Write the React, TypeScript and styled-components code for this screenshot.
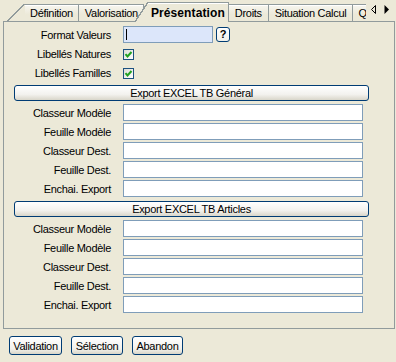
import React from 'react';
import styled, { createGlobalStyle } from 'styled-components';

const GlobalStyle = createGlobalStyle`
  html, body { margin: 0; padding: 0; background: #ECE9D8; }
  body {
    font-family: "Liberation Sans", Arial, sans-serif;
    font-size: 11px;
    letter-spacing: -0.3px;
    color: #000;
  }
  * { box-sizing: border-box; }
`;

const BG = '#ECE9D8';
const LINE = '#919B9C';

const Window = styled.div`
  width: 396px;
  height: 362px;
  background: ${BG};
  overflow: hidden;
`;

const TabStrip = styled.div`
  position: relative;
  display: flex;
  align-items: flex-end;
  height: 22px;
  margin: 0 1px 0 3px;
  padding-left: 4px;
  border-bottom: 1px solid ${LINE};
`;

const Tab = styled.div<{ $active?: boolean; $overlap?: number }>`
  position: relative;
  display: flex;
  height: ${p => (p.$active ? 20 : 17)}px;
  margin-bottom: ${p => (p.$active ? -1 : 0)}px;
  margin-left: ${p => -(p.$overlap ?? 0)}px;
  z-index: ${p => (p.$active ? 1 : 0)};
`;

const Slant = styled.span<{ $w: number; $fill: string }>`
  width: ${p => p.$w}px;
  height: 100%;
  flex: none;
  background: linear-gradient(
    to bottom right,
    transparent calc(50% - 0.7px),
    ${LINE} calc(50% - 0.7px),
    ${LINE} calc(50% + 0.7px),
    ${p => p.$fill} calc(50% + 0.7px)
  );
`;

const TabBody = styled.span<{ $active?: boolean; $pl: number; $pr: number }>`
  display: flex;
  align-items: center;
  height: 100%;
  padding: 0 ${p => p.$pr}px 0 ${p => p.$pl}px;
  border-top: 1px solid ${LINE};
  border-right: 1px solid ${LINE};
  background: ${p => (p.$active ? BG : `linear-gradient(#F7F6F0, ${BG} 60%)`)};
  font-weight: ${p => (p.$active ? 'bold' : 'normal')};
  font-size: ${p => (p.$active ? 12 : 11)}px;
  letter-spacing: ${p => (p.$active ? '0.1px' : '-0.3px')};
  white-space: nowrap;
  box-shadow: inset 0 1px 0 #fff;
`;

const ArrowBox = styled.div`
  position: absolute;
  right: -1px;
  top: 0;
  width: 30px;
  height: 21px;
  background: ${BG};
  display: flex;
  align-items: flex-start;
  padding: 5px 0 0 5px;
  gap: 8px;
  z-index: 2;
`;

const Panel = styled.div`
  margin: 0 1px 0 3px;
  height: 307px;
  border: 1px solid ${LINE};
  border-top: none;
  padding-top: 4px;
  display: flex;
  flex-direction: column;
`;

const Row = styled.div`
  display: flex;
  align-items: center;
  height: 17px;
  margin-bottom: 2px;
`;

const Label = styled.span`
  width: 107px;
  margin-right: 12px;
  text-align: right;
  white-space: nowrap;
`;

const Field = styled.div<{ $w: number; $focus?: boolean }>`
  position: relative;
  width: ${p => p.$w}px;
  height: 17px;
  border: 1px solid #7F9DB9;
  background: ${p => (p.$focus ? '#DCE6FA' : '#fff')};
`;

const Caret = styled.span`
  position: absolute;
  left: 2px;
  top: 2px;
  width: 1px;
  height: 11px;
  background: #000;
`;

const HelpButton = styled.div`
  width: 14px;
  height: 15px;
  margin-left: 3px;
  border: 1px solid #003C74;
  border-radius: 3px;
  background: linear-gradient(#ffffff, #F0F0EA);
  font-weight: bold;
  font-size: 11px;
  display: flex;
  align-items: center;
  justify-content: center;
  line-height: 1;
`;

const Check = styled.span`
  width: 11px;
  height: 11px;
  margin-top: 1px;
  border: 1px solid #1C5180;
  background: linear-gradient(135deg, #DCDCD7, #fff);
  display: flex;
  align-items: center;
  justify-content: center;
`;

const SectionHeader = styled.div`
  width: 355px;
  height: 16px;
  margin: 2px 0 3px 10px;
  border: 1px solid #003C74;
  border-radius: 3px;
  background: linear-gradient(#ffffff, #F3F2EE 60%, #D9D6CA);
  display: flex;
  align-items: center;
  justify-content: center;
  white-space: nowrap;
`;

const ButtonBar = styled.div`
  display: flex;
  gap: 9px;
  padding: 7px 0 0 9px;
`;

const Button = styled.div<{ $w: number }>`
  width: ${p => p.$w}px;
  height: 19px;
  border: 1px solid #003C74;
  border-radius: 3px;
  background: linear-gradient(#ffffff, #F2F1EC 70%, #D8D5C8);
  display: flex;
  align-items: center;
  justify-content: center;
  white-space: nowrap;
`;

const CheckMark = () => (
  <svg width="9" height="9" viewBox="0 0 9 9">
    <path d="M1.5 4.2 L3.5 6.5 L7.5 2" fill="none" stroke="#21A121" strokeWidth="2" />
  </svg>
);

const exportFields = ['Classeur Modèle', 'Feuille Modèle', 'Classeur Dest.', 'Feuille Dest.', 'Enchai. Export'];

const Section: React.FC<{ title: string }> = ({ title }) => (
  <>
    <SectionHeader>{title}</SectionHeader>
    {exportFields.map(f => (
      <Row key={f}>
        <Label>{f}</Label>
        <Field $w={240} />
      </Row>
    ))}
  </>
);

export default function App() {
  return (
    <Window>
      <GlobalStyle />
      <TabStrip>
        <Tab>
          <Slant $w={18} $fill={BG} />
          <TabBody $pl={5} $pr={5}>Définition</TabBody>
        </Tab>
        <Tab>
          <TabBody $pl={6} $pr={5}>Valorisation</TabBody>
        </Tab>
        <Tab $active $overlap={9}>
          <Slant $w={13} $fill={BG} />
          <TabBody $active $pl={3} $pr={3}>Présentation</TabBody>
        </Tab>
        <Tab>
          <TabBody $pl={6} $pr={6}>Droits</TabBody>
        </Tab>
        <Tab>
          <TabBody $pl={6} $pr={6}>Situation Calcul</TabBody>
        </Tab>
        <Tab>
          <TabBody $pl={5} $pr={8}>Q</TabBody>
        </Tab>
        <ArrowBox>
          <svg width="5" height="9" viewBox="0 0 5 9">
            <path d="M4.5 0.5 L4.5 8.5 L0.5 4.5 Z" fill="none" stroke="#000" strokeWidth="1" />
          </svg>
          <svg width="5" height="9" viewBox="0 0 5 9">
            <path d="M0.5 0 L0.5 9 L5 4.5 Z" fill="#000" />
          </svg>
        </ArrowBox>
      </TabStrip>
      <Panel>
        <Row>
          <Label>Format Valeurs</Label>
          <Field $w={90} $focus>
            <Caret />
          </Field>
          <HelpButton>?</HelpButton>
        </Row>
        <Row>
          <Label>Libellés Natures</Label>
          <Check><CheckMark /></Check>
        </Row>
        <Row>
          <Label>Libellés Familles</Label>
          <Check><CheckMark /></Check>
        </Row>
        <Section title="Export EXCEL TB Général" />
        <Section title="Export EXCEL TB Articles" />
      </Panel>
      <ButtonBar>
        <Button $w={53}>Validation</Button>
        <Button $w={52}>Sélection</Button>
        <Button $w={51}>Abandon</Button>
      </ButtonBar>
    </Window>
  );
}
